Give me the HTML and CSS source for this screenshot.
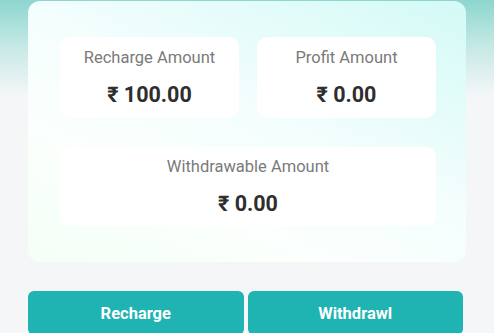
FILE: index.html
```html
<!DOCTYPE html>
<html lang="en">
<head>
  <meta charset="UTF-8">
  <meta name="viewport" content="width=device-width, initial-scale=1.0">
  <title>Wallet</title>
  <link rel="stylesheet" href="styles.css">
</head>
<body>
  <div class="page">
    <div class="wallet-card">
      <div class="stats">
        <div class="stat">
          <div class="stat-label">Recharge Amount</div>
          <div class="stat-value">₹ 100.00</div>
        </div>
        <div class="stat">
          <div class="stat-label">Profit Amount</div>
          <div class="stat-value">₹ 0.00</div>
        </div>
        <div class="stat stat-wide">
          <div class="stat-label">Withdrawable Amount</div>
          <div class="stat-value">₹ 0.00</div>
        </div>
      </div>
    </div>

    <div class="actions">
      <button class="btn">Recharge</button>
      <button class="btn">Withdrawl</button>
    </div>
  </div>
</body>
</html>
```

FILE: styles.css
```css
:root {
  --page-bg: #f4f6f8;
  --teal: #1fb3b2;
  --label-color: #7a7a7a;
  --value-color: #2e2e2e;
}

body {
  margin: 0;
  font-family: Roboto, "Noto Sans", sans-serif;
  background: linear-gradient(180deg, #8dd6cf 0, #c4e8e4 45px, var(--page-bg) 95px, var(--page-bg) 100%);
  min-height: 100vh;
  overflow: hidden;
}

.page {
  padding: 1px 28px 0;
}

.wallet-card {
  border-radius: 12px;
  padding: 36px 30px 36px 32px;
  background: linear-gradient(205deg, #d3faf6 0%, #f3fefd 45%, #fbfffd 70%, #f4fff6 100%);
}

.stats {
  display: grid;
  grid-template-columns: 1fr 1fr;
  column-gap: 18px;
  row-gap: 29px;
}

.stat {
  background: #ffffff;
  border-radius: 10px;
  height: 81px;
  display: flex;
  flex-direction: column;
  align-items: center;
  justify-content: center;
  gap: 15px;
}

.stat-wide {
  grid-column: 1 / 3;
  height: 79px;
}

.stat-label {
  font-size: 16.5px;
  color: var(--label-color);
}

.stat-value {
  font-size: 21.5px;
  font-weight: bold;
  color: var(--value-color);
}

.actions {
  display: flex;
  gap: 4px;
  margin-top: 29px;
  padding-right: 3px;
}

.btn {
  flex: 1;
  height: 44px;
  border: none;
  border-radius: 6px;
  background-color: var(--teal);
  color: #ffffff;
  font-family: Roboto, "Noto Sans", sans-serif;
  font-size: 16.5px;
  font-weight: bold;
  cursor: pointer;
}
```
